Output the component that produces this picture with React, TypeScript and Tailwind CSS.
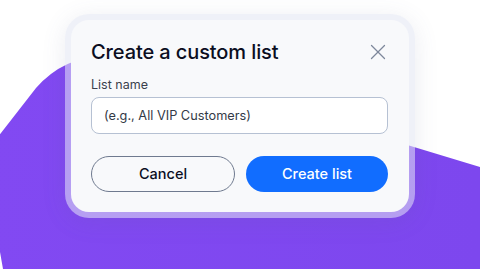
import { X } from "lucide-react"

const App = () => {
    return (
        <div className="relative w-[480px] h-[270px] overflow-hidden bg-white" style={{ fontFamily: "Inter, 'Noto Sans', sans-serif" }}>
            {/* purple backdrop shape */}
            <svg className="absolute inset-0" width="480" height="270" viewBox="0 0 480 270">
                <defs>
                    <linearGradient id="bg" x1="0" y1="0" x2="1" y2="0">
                        <stop offset="0" stopColor="#8249f2" />
                        <stop offset="1" stopColor="#7d47ee" />
                    </linearGradient>
                </defs>
                <path d="M -10 147 L 36 88 Q 70 50 120 58 L 480 167 L 480 269 L 3 269 L 0 252 L -10 200 Z" fill="url(#bg)" />
            </svg>

            <div className="relative pt-[14px] pl-[65px]">
                <div className="w-[350px] p-[6px] rounded-[24px] bg-[rgba(226,230,242,0.55)] shadow-[0_4px_24px_rgba(90,100,140,0.12)]">
                    <div className="rounded-[18px] bg-[#f8f9fb] pt-[20px] pb-[20px] pl-[20px] pr-[21px]">
                        <div className="flex items-center justify-between h-6">
                            <h1 className="text-[20px] leading-6 font-medium text-[#0b0e1f] tracking-[-0.1px]">Create a custom list</h1>
                            <X className="text-[#7d889b] mr-[-3px]" size={26} strokeWidth={1.2} />
                        </div>
                        <p className="mt-[13px] text-[12.5px] leading-4 text-[#3a3f4d]">List name</p>
                        <div className="mt-[4px] h-[37px] rounded-[8px] border border-[#b6c1d3] bg-white flex items-center px-[12px]">
                            <span className="text-[12.75px] text-[#333a47]">(e.g., All VIP Customers)</span>
                        </div>
                        <div className="mt-[22px] flex gap-[11px]">
                            <button className="flex-1 h-[36px] rounded-full border border-[#6f7a8f] text-[14.5px] font-medium text-[#0b0e1f]">Cancel</button>
                            <button className="flex-1 h-[36px] rounded-full bg-[#116dff] text-[14.5px] font-medium text-white">Create list</button>
                        </div>
                    </div>
                </div>
            </div>
        </div>
    )
}

export default App
